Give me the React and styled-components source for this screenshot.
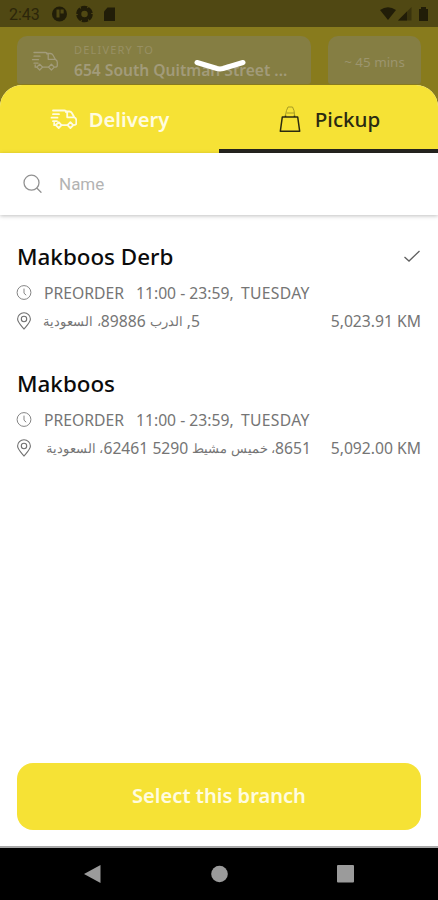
import React, { useState } from "react";
import styled, { createGlobalStyle } from "styled-components";

const branches = [
  {
    id: 1,
    name: "Makboos Derb",
    hours: "11:00 - 23:59,",
    day: "TUESDAY",
    address: ["5, ", "الدرب", " 89886", "، السعودية"],
    addressWidth: 156,
    distance: "5,023.91 KM",
  },
  {
    id: 2,
    name: "Makboos",
    hours: "11:00 - 23:59,",
    day: "TUESDAY",
    address: ["8651", "، خميس مشيط", " 5290 62461", "، السعودية"],
    addressWidth: 267,
    distance: "5,092.00 KM",
  },
];

const TruckIcon = ({ stroke = 1.8 }) => (
  <svg width="27" height="21" viewBox="0 0 27 21" fill="none" stroke="currentColor" strokeWidth={stroke} strokeLinecap="round" strokeLinejoin="round">
    <path d="M3 1.500h11.500q1.500 0 1.500 1.500M3 5.200h6M1.500 8.700h6M3 12.200h4" />
    <path d="M16 2.500h3.500q1.500 0 2.400 1.500l2.400 4.300q2 1 2 3v3.200q0 1.700-2.500 1.700M17.200 3v5.300h6.800" />
    <path d="M4.200 14v2.200h1.600M11.500 16.200h6" />
    <path d="M8.700 13.200l2.900 2.900-2.900 2.900-2.900-2.900zM20.400 13.200l2.900 2.900-2.900 2.900-2.900-2.900z" />
  </svg>
);

const BagIcon = () => (
  <svg width="22" height="28" viewBox="0 0 22 28" fill="none">
    <path d="M6.500 10L7.500 5.500 9 2h4.500L15 5.500l.5 4.500M7.500 8h8" stroke="#a79c23" strokeWidth="1" />
    <path d="M3.300 12L1.300 26.300h19.400L18.700 12z" stroke="#2b2a10" strokeWidth="1.500" strokeLinejoin="round" />
    <path d="M6.500 10.500V12M15.500 10.500V12" stroke="#2b2a10" strokeWidth="1.500" />
  </svg>
);

const SearchIcon = () => (
  <svg width="20" height="20" viewBox="0 0 20 20" fill="none" stroke="#929292" strokeWidth="1.3" strokeLinecap="round">
    <circle cx="8.500" cy="8.700" r="7.500" />
    <path d="M14 14.200l4 4" />
  </svg>
);

const ClockIcon = () => (
  <svg width="16" height="16" viewBox="0 0 16 16" fill="none" stroke="#858585" strokeWidth="1">
    <circle cx="8" cy="7.500" r="6.900" />
    <path d="M8 3.600v4.600l2.200 2" />
  </svg>
);

const PinIcon = () => (
  <svg width="16" height="19" viewBox="0 0 16 19" fill="none" stroke="#707070" strokeWidth="1.1">
    <path d="M8 17C6.500 15 1.600 10.500 1.600 7a6.400 6.200 0 0 1 12.800 0C14.400 10.500 9.500 15 8 17z" />
    <circle cx="8" cy="7" r="2.700" />
  </svg>
);

const CheckIcon = () => (
  <svg width="18" height="14" viewBox="0 0 18 14" fill="none" stroke="#606060" strokeWidth="1.3">
    <path d="M1.500 7l4.500 4L16.500 1" />
  </svg>
);

const StatusIcons = () => (
  <svg width="66" height="18" viewBox="0 0 66 18">
    <circle cx="8.500" cy="9" r="7.500" fill="#211d08" />
    <path d="M5.500 4.500h3v8h-3zM9.500 4.500h3.200v4H9.500z" fill="#504813" />
    <circle cx="33.500" cy="9" r="7" fill="none" stroke="#211d08" strokeWidth="2.500" strokeDasharray="6.300 1" />
    <circle cx="33.500" cy="9" r="5" fill="none" stroke="#211d08" strokeWidth="3.500" />
    <path d="M32 6l4.500 3-4.500 3z" fill="#504813" />
    <path d="M56.500 2.500H64V16H53V6.500z" fill="#211d08" />
  </svg>
);

const SignalIcons = () => (
  <svg width="50" height="16" viewBox="0 0 50 16">
    <path d="M0 4Q8 -1.500 16 4L8 14z" fill="#211d08" />
    <path d="M18 14.500L31.500 1v13.500z" fill="#39330d" />
    <path d="M18 14.500L27 5.500v9z" fill="#211d08" />
    <path d="M39 3h2V1h5v2h2v12h-9z" fill="#211d08" />
  </svg>
);

const App = () => {
  const [activeTab, setActiveTab] = useState("pickup");
  const [selected, setSelected] = useState(1);

  return (
    <Screen>
      <GlobalStyle />
      <StatusBar>
        <Time>2:43</Time>
        <StatusIcons />
        <SignalIcons />
      </StatusBar>
      <Header>
        <AddressCard>
          <TruckIcon stroke={1.3} />
          <div>
            <Caption>DELIVERY TO</Caption>
            <Street>654 South Quitman Street ...</Street>
          </div>
        </AddressCard>
        <EtaCard>~ 45 mins</EtaCard>
        <DragHandle width="52" height="14" viewBox="0 0 52 14">
          <path d="M3 3.500L23 9.500Q26 10.300 29 9.500L49 3.500" />
        </DragHandle>
      </Header>
      <Sheet>
        <Tabs>
          <Tab type="button" $active={activeTab === "delivery"} onClick={() => setActiveTab("delivery")}>
            <TruckIcon />
            <TabLabel>Delivery</TabLabel>
          </Tab>
          <Tab type="button" $wide $active={activeTab === "pickup"} onClick={() => setActiveTab("pickup")}>
            <BagIcon />
            <TabLabel $dark>Pickup</TabLabel>
          </Tab>
        </Tabs>
        <SearchBar>
          <SearchIcon />
          <SearchInput placeholder="Name" />
        </SearchBar>
        <BranchList>
          {branches.map((branch) => (
            <Branch key={branch.id} onClick={() => setSelected(branch.id)}>
              <BranchHead>
                <BranchName>{branch.name}</BranchName>
                {selected === branch.id && <CheckIcon />}
              </BranchHead>
              <InfoRow>
                <ClockIcon />
                <Status>PREORDER</Status>
                <Hours>{branch.hours}</Hours>
                <Day>{branch.day}</Day>
              </InfoRow>
              <InfoRow>
                <PinIcon />
                <Address dir="rtl" $width={branch.addressWidth}>
                  {branch.address.map((part, index) =>
                    index % 2 ? <Arabic key={index}>{part}</Arabic> : part
                  )}
                </Address>
                <Distance>{branch.distance}</Distance>
              </InfoRow>
            </Branch>
          ))}
        </BranchList>
        <SelectButton type="button">Select this branch</SelectButton>
      </Sheet>
      <NavBar>
        <svg width="17" height="18" viewBox="0 0 17 18">
          <path d="M0 9L16.500 0v18z" />
        </svg>
        <svg width="17" height="18" viewBox="0 0 17 18">
          <circle cx="8.500" cy="9" r="8.300" />
        </svg>
        <svg width="17" height="18" viewBox="0 0 17 18">
          <rect width="17" height="17.500" rx="1" />
        </svg>
      </NavBar>
    </Screen>
  );
};

const GlobalStyle = createGlobalStyle`
  * {
    box-sizing: border-box;
  }
  body {
    margin: 0;
    font-family: "Noto Sans", "Open Sans", sans-serif;
  }
  button {
    border: 0;
    padding: 0;
    font-family: inherit;
    cursor: pointer;
  }
  svg {
    display: block;
    flex-shrink: 0;
  }
`;

const Screen = styled.div`
  display: flex;
  flex-direction: column;
  height: 900px;
  width: 438px;
  overflow: hidden;
  background: #887b1d;
`;

const StatusBar = styled.div`
  display: flex;
  align-items: center;
  height: 27px;
  padding: 1px 8px 0 9px;
  background: #504813;

  svg:last-child {
    margin-left: auto;
  }
`;

const Time = styled.span`
  width: 42px;
  font-family: Roboto, sans-serif;
  font-size: 16px;
  color: #2c260a;
`;

const Header = styled.div`
  position: relative;
  display: flex;
  gap: 17px;
  height: 58px;
  padding: 9px 17px 1px;
`;

const AddressCard = styled.div`
  display: flex;
  width: 294px;
  padding: 7px 0 0 14px;
  border-radius: 10px 10px 3px 3px;
  background: #857e43;
  color: #a29b7a;

  > svg {
    margin: 8px 16px 0 0;
  }
`;

const Caption = styled.div`
  font-size: 11px;
  line-height: 14px;
  letter-spacing: 1.2px;
  color: #989064;
`;

const Street = styled.div`
  font-size: 15.6px;
  font-weight: 600;
  line-height: 26px;
  white-space: nowrap;
`;

const EtaCard = styled.div`
  width: 93px;
  padding-top: 15px;
  border-radius: 10px 10px 3px 3px;
  background: #857e43;
  color: #9c956e;
  font-size: 13.4px;
  line-height: 22px;
  text-align: center;
`;

const DragHandle = styled.svg`
  position: absolute;
  left: 194px;
  top: 32px;
  fill: none;
  stroke: #fff;
  stroke-width: 5;
  stroke-linecap: round;
  stroke-linejoin: round;
`;

const Sheet = styled.div`
  display: flex;
  flex-direction: column;
  flex: 1;
  overflow: hidden;
  border-radius: 22px 22px 0 0;
  border-bottom: 2px solid #a8a8a8;
  background: #fff;
`;

const Tabs = styled.div`
  display: flex;
  height: 68px;
  background: #f6e235;
`;

const Tab = styled.button`
  display: flex;
  width: 50%;
  align-items: center;
  justify-content: center;
  gap: ${({ $wide }) => ($wide ? 14 : 12)}px;
  padding: 4px 0 0 ${({ $wide }) => ($wide ? 2 : 0)}px;
  border-bottom: 4px solid ${({ $active }) => ($active ? "#25241f" : "transparent")};
  background: transparent;
  color: #fffce0;
`;

const TabLabel = styled.span`
  font-size: ${({ $dark }) => ($dark ? 20.6 : 20.2)}px;
  font-weight: ${({ $dark }) => ($dark ? 500 : 600)};
  line-height: 28px;
  color: ${({ $dark }) => ($dark ? "#2b2a12" : "#fffce0")};
`;

const SearchBar = styled.div`
  display: flex;
  align-items: center;
  gap: 16px;
  height: 62px;
  padding: 0 23px;
  box-shadow: 0 1px 4px rgba(0, 0, 0, 0.25);
`;

const SearchInput = styled.input`
  flex: 1;
  padding: 0;
  border: 0;
  outline: 0;
  font-family: Roboto, sans-serif;
  font-size: 17px;
  background: none;

  &::placeholder {
    color: #b3b3b3;
  }
`;

const BranchList = styled.div`
  flex: 1;
  padding: 24px 17px 0;
`;

const Branch = styled.div`
  height: 127px;
`;

const BranchHead = styled.div`
  display: flex;
  align-items: center;
  justify-content: space-between;
  height: 36px;
  margin-bottom: 4px;
`;

const BranchName = styled.h2`
  margin: 0;
  font-size: 22.4px;
  font-weight: 500;
  line-height: 30px;
  color: #0b0b0b;
`;

const InfoRow = styled.div`
  display: flex;
  align-items: center;
  height: 28px;
  margin-left: -1px;
  font-size: 15.7px;
  line-height: 22px;
  color: #757575;
  white-space: nowrap;
`;

const Status = styled.span`
  width: 92px;
  margin-left: 12px;
`;

const Hours = styled.span`
  width: 105px;
`;

const Day = styled.span`
  letter-spacing: 0.3px;
`;

const Address = styled.span`
  width: ${({ $width }) => $width}px;
  margin-left: 12px;
`;

const Arabic = styled.span`
  font-size: 12.9px;
  line-height: 1;
  vertical-align: 1px;
`;

const Distance = styled.span`
  margin-left: auto;
`;

const SelectButton = styled.button`
  height: 67px;
  margin: 0 17px 16px;
  padding-bottom: 2px;
  border-radius: 16px;
  background: #f6e235;
  color: #fffce0;
  font-size: 20.1px;
  font-weight: 600;
`;

const NavBar = styled.div`
  display: flex;
  justify-content: space-between;
  height: 52px;
  padding: 17px 84px 0;
  background: #000;
  fill: #9b9b9b;
`;

export default App;
